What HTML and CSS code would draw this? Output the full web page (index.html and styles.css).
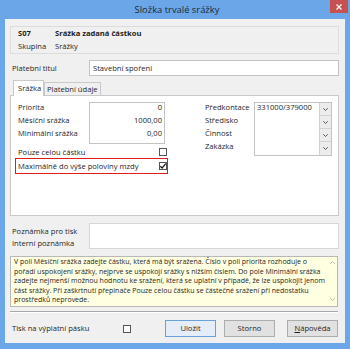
FILE: index.html
```html
<!DOCTYPE html>
<html>
<head>
    <title>Složka trvalé srážky</title>
    <meta charset="UTF-8">
    <link rel="stylesheet" href="styles.css">
</head>
<body>
    <div class="window">
        <div class="titlebar">
            <span class="title">Složka trvalé srážky</span>
            <span class="close">
                <svg width="6" height="6" viewBox="0 0 6 6"><path d="M0.5 0.5 L5.5 5.5 M5.5 0.5 L0.5 5.5" stroke="#fff" stroke-width="1.2"/></svg>
            </span>
        </div>
        <div class="client">
            <div class="header-box">
                <div class="hrow bold"><span>S07</span><span>Srážka zadaná částkou</span></div>
                <div class="hrow"><span>Skupina</span><span>Srážky</span></div>
            </div>

            <div class="field-row">
                <label>Platební titul</label>
                <div class="input">Stavební spoření</div>
            </div>

            <div class="tabs">
                <div class="tab active">Srážka</div>
                <div class="tab">Platební údaje</div>
            </div>
            <div class="panel">
                <div class="left-col">
                    <div class="num-group">
                        <div class="num-labels">
                            <div class="row">Priorita</div>
                            <div class="row">Měsíční srážka</div>
                            <div class="row">Minimální srážka</div>
                        </div>
                        <div class="num-box">
                            <div class="row">0</div>
                            <div class="row">1000,00</div>
                            <div class="row">0,00</div>
                        </div>
                    </div>
                    <div class="check-row">
                        <span>Pouze celou částku</span>
                        <span class="checkbox"></span>
                    </div>
                    <div class="check-row highlight">
                        <span>Maximálně do výše poloviny mzdy</span>
                        <span class="checkbox">
                            <svg width="8" height="8" viewBox="0 0 8 8"><path d="M1.3 4.2 L3.1 6 L6.8 1.6" fill="none" stroke="#222" stroke-width="1.4"/></svg>
                        </span>
                    </div>
                </div>
                <div class="right-col">
                    <div class="acc-labels">
                        <div class="row">Předkontace</div>
                        <div class="row">Středisko</div>
                        <div class="row">Činnost</div>
                        <div class="row">Zakázka</div>
                    </div>
                    <div class="acc-box">
                        <div class="acc-values">
                            <div class="row">331000/379000</div>
                        </div>
                        <div class="drops">
                            <div class="drop"><svg width="5" height="3" viewBox="0 0 5 3"><path d="M0.3 0.3 L2.5 2.5 L4.7 0.3" fill="none" stroke="#555" stroke-width="1"/></svg></div>
                            <div class="drop"><svg width="5" height="3" viewBox="0 0 5 3"><path d="M0.3 0.3 L2.5 2.5 L4.7 0.3" fill="none" stroke="#555" stroke-width="1"/></svg></div>
                            <div class="drop"><svg width="5" height="3" viewBox="0 0 5 3"><path d="M0.3 0.3 L2.5 2.5 L4.7 0.3" fill="none" stroke="#555" stroke-width="1"/></svg></div>
                            <div class="drop"><svg width="5" height="3" viewBox="0 0 5 3"><path d="M0.3 0.3 L2.5 2.5 L4.7 0.3" fill="none" stroke="#555" stroke-width="1"/></svg></div>
                        </div>
                    </div>
                </div>
            </div>

            <div class="note-row">
                <div class="note-labels">
                    <div>Poznámka pro tisk</div>
                    <div>Interní poznámka</div>
                </div>
                <div class="note-box"></div>
            </div>

            <div class="help">
                <div class="help-text">
                    V poli Měsíční srážka zadejte částku, která má být sražena. Číslo v poli priorita rozhoduje o<br>
                    pořadí uspokojení srážky, nejprve se uspokojí srážky s nižším číslem. Do pole Minimální srážka<br>
                    zadejte nejmenší možnou hodnotu ke sražení, která se uplatní v případě, že lze uspokojit jenom<br>
                    část srážky. Při zaškrtnutí přepínače Pouze celou částku se částečné sražení při nedostatku<br>
                    prostředků neprovede.
                </div>
                <div class="scroll">
                    <svg width="5" height="3" viewBox="0 0 5 3"><path d="M0.3 2.7 L2.5 0.5 L4.7 2.7" fill="none" stroke="#b4b4b4" stroke-width="1"/></svg>
                    <svg width="5" height="3" viewBox="0 0 5 3"><path d="M0.3 0.3 L2.5 2.5 L4.7 0.3" fill="none" stroke="#b4b4b4" stroke-width="1"/></svg>
                </div>
            </div>

            <div class="separator"></div>

            <div class="footer">
                <span class="print-label">Tisk na výplatní pásku</span>
                <span class="checkbox"></span>
                <div class="buttons">
                    <button class="btn default">Uložit</button>
                    <button class="btn">Storno</button>
                    <button class="btn help-btn"><u>N</u>ápověda</button>
                </div>
            </div>
        </div>
    </div>
</body>
</html>
```

FILE: styles.css
```css
:root {
    --frame: #6ba6e9;
    --text: #1e1e1e;
    --field-border: #c3c3c3;
}

html, body {
    margin: 0;
    padding: 0;
}

body {
    font-family: "Open Sans", "Noto Sans", sans-serif;
    font-size: 7.6px;
    color: var(--text);
    width: 350px;
    height: 349px;
    overflow: hidden;
}

.window {
    background: var(--frame);
    width: 350px;
    height: 349px;
    box-sizing: border-box;
    padding: 0 5px 6px 5px;
    display: flex;
    flex-direction: column;
}

.titlebar {
    height: 19px;
    display: flex;
    justify-content: center;
    align-items: center;
    position: relative;
}

.title {
    font-size: 9.4px;
    color: #1a2a3a;
    margin-left: 4px;
}

.close {
    position: absolute;
    right: -3px;
    top: 0;
    width: 18px;
    height: 13px;
    background: #c75050;
    display: flex;
    align-items: center;
    justify-content: center;
}

.close svg {
    display: block;
}

.client {
    flex: 1;
    background: #f0f0f0;
    padding: 7px 6px 0 5px;
    display: flex;
    flex-direction: column;
}

/* header */
.header-box {
    border: 1px solid #dcdcdc;
    padding-left: 7px;
}

.hrow {
    display: grid;
    grid-template-columns: 37px 1fr;
    height: 13px;
    line-height: 13px;
}

.hrow.bold {
    font-weight: 700;
}

.field-row {
    display: grid;
    grid-template-columns: 79px 1fr;
    align-items: center;
    margin-top: 6px;
}

.field-row label {
    padding-left: 2px;
}

.input {
    height: 16px;
    box-sizing: border-box;
    border: 1px solid var(--field-border);
    background: #fff;
    line-height: 14px;
    padding-left: 3px;
}

/* tabs */
.tabs {
    display: flex;
    align-items: flex-end;
    margin-top: 5px;
    padding-left: 3px;
    border-bottom: 1px solid #c9c9c9;
    height: 14px;
}

.tab {
    border: 1px solid #c9c9c9;
    border-bottom: none;
    height: 12px;
    line-height: 12px;
    padding: 0 2px;
    background: #f0f0f0;
}

.tab.active {
    background: #fff;
    height: 16px;
    line-height: 15px;
    margin-bottom: -1px;
    width: 31px;
    box-sizing: border-box;
    padding: 0 4px;
}

.panel {
    background: #fff;
    border: 1px solid #c9c9c9;
    border-top: none;
    height: 120px;
    box-sizing: border-box;
    padding: 6px 6px 0 4px;
    display: flex;
}

.row {
    height: 13px;
    line-height: 9px;
    white-space: nowrap;
}

.left-col {
    width: 153px;
}

.num-group {
    display: grid;
    grid-template-columns: 74px 76px;
}

.num-labels {
    padding-left: 3px;
    padding-top: 1px;
}

.num-box {
    border: 1px solid var(--field-border);
    height: 42px;
    box-sizing: border-box;
    padding-right: 2px;
    text-align: right;
}

.check-row {
    display: flex;
    justify-content: space-between;
    align-items: center;
    padding: 0 1px 0 3px;
    height: 12px;
    margin-top: 2px;
}

.check-row.highlight {
    border: 1px solid #e21b1b;
    height: 14px;
    box-sizing: content-box;
    padding: 0 0 0 2px;
    margin-top: 0;
}

.checkbox {
    width: 8px;
    height: 8px;
    border: 1px solid #555;
    background: #fff;
    box-sizing: border-box;
    display: flex;
    align-items: center;
    justify-content: center;
}

.checkbox svg {
    display: block;
    flex: none;
}

.right-col {
    flex: 1;
    margin-left: 37px;
    display: grid;
    grid-template-columns: 49px 1fr;
}

.acc-labels {
    padding-top: 1px;
}

.acc-box {
    border: 1px solid var(--field-border);
    height: 54px;
    box-sizing: border-box;
    display: flex;
}

.acc-values {
    flex: 1;
    padding-left: 2px;
}

.drops {
    width: 12px;
    display: flex;
    flex-direction: column;
}

.drop {
    height: 13px;
    box-sizing: border-box;
    border-left: 1px solid #d2d2d2;
    border-bottom: 1px solid #d2d2d2;
    background: #ececec;
    display: flex;
    align-items: center;
    justify-content: center;
}

.drop:last-child {
    border-bottom: none;
}

.drop svg {
    display: block;
}

/* notes */
.note-row {
    display: grid;
    grid-template-columns: 79px 1fr;
    margin-top: 7px;
}

.note-labels {
    padding-left: 2px;
    padding-top: 2px;
    line-height: 12px;
}

.note-box {
    height: 26px;
    box-sizing: border-box;
    border: 1px solid #d6d6d6;
    background: #fff;
}

.help {
    margin-top: 7px;
    height: 51px;
    box-sizing: border-box;
    border: 1px solid #b8b8b8;
    background: #ffffe1;
    display: flex;
    margin-right: 1px;
}

.help-text {
    flex: 1;
    font-size: 7px;
    line-height: 9.5px;
    padding-left: 3px;
    white-space: nowrap;
    overflow: hidden;
}

.scroll {
    width: 10px;
    display: flex;
    flex-direction: column;
    justify-content: space-between;
    align-items: center;
    padding: 4px 0 5px;
}

.scroll svg {
    display: block;
}

.separator {
    margin-top: 4px;
    border-top: 1px solid #a8a8a8;
    border-bottom: 1px solid #fff;
    margin-right: 1px;
}

.footer {
    flex: 1;
    display: flex;
    align-items: center;
    padding-left: 2px;
}

.print-label {
    width: 111px;
}

.footer .checkbox {
    margin-top: 1px;
}

.buttons {
    margin-left: auto;
    display: flex;
    gap: 8px;
    margin-right: 1px;
}

.btn {
    font-family: inherit;
    font-size: 7.6px;
    color: var(--text);
    width: 51px;
    height: 17px;
    padding: 0;
    background: #e1e1e1;
    border: 1px solid #adadad;
}

.btn.default {
    border-color: #6aa0d8;
    background: #e5eef8;
}

.btn.help-btn {
    margin-left: 4px;
}
```
